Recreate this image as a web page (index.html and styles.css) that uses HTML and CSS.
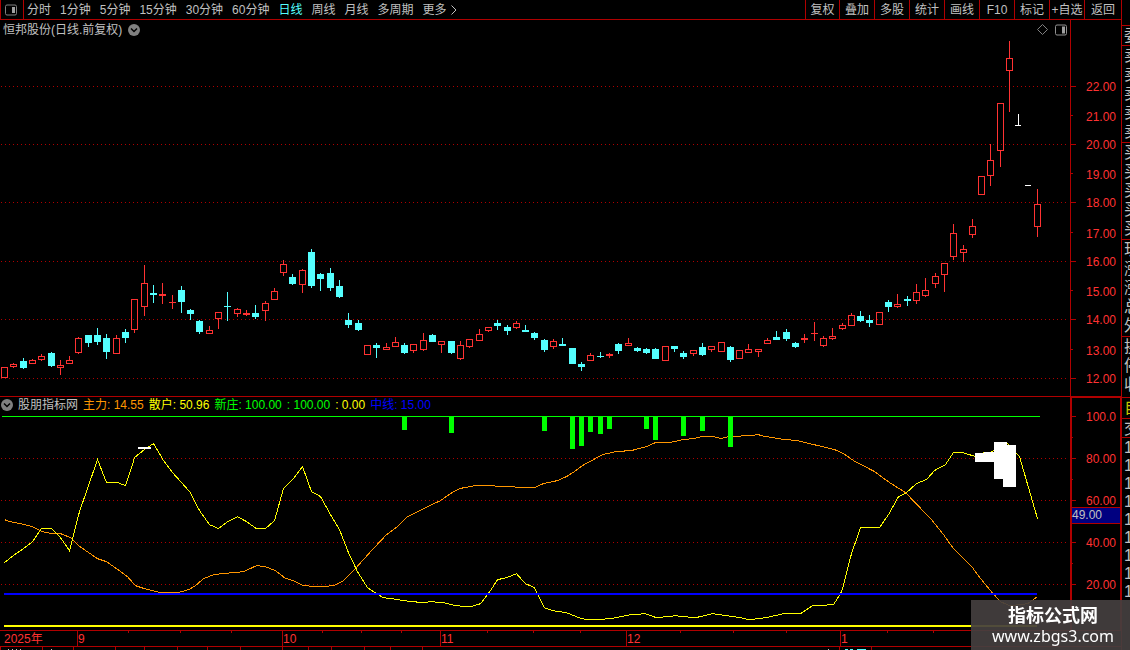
FILE: index.html
```html
<!DOCTYPE html>
<html lang="zh-CN">
<head>
    <meta charset="UTF-8">
    <meta name="viewport" content="width=device-width, initial-scale=1.0">
    <title>恒邦股份 日线</title>
    <link rel="stylesheet" href="styles.css">
</head>
<body>

    <div class="terminal">
        <main class="main">
            <nav class="toolbar">
                <button class="layout-btn" aria-label="布局">
                    <svg width="12" height="12" viewBox="0 0 12 12"><rect x="0.5" y="1" width="11" height="10" rx="1.5" fill="none" stroke="#808080"/><rect x="7" y="3" width="3" height="6" fill="#a0a0a0"/></svg>
                </button>
                <div class="periods">
                    <button>分时</button>
                    <button>1分钟</button>
                    <button>5分钟</button>
                    <button>15分钟</button>
                    <button>30分钟</button>
                    <button>60分钟</button>
                    <button class="active">日线</button>
                    <button>周线</button>
                    <button>月线</button>
                    <button>多周期</button>
                    <button class="more">更多<svg width="6" height="10" viewBox="0 0 6 10"><path d="M0.5 0.5L5 5L0.5 9.5" fill="none" stroke="#c0c0c0"/></svg></button>
                </div>
                <div class="tools">
                    <button>复权</button>
                    <button>叠加</button>
                    <button>多股</button>
                    <button>统计</button>
                    <button>画线</button>
                    <button>F10</button>
                    <button>标记</button>
                    <button>+自选</button>
                    <button>返回</button>
                </div>
            </nav>

            <section class="panel price-panel">
                <div class="plot-area">
                    <header class="panel-head title-head">
                        <span>恒邦股份(日线.前复权)</span>
                        <svg width="12" height="12" viewBox="0 0 12 12"><circle cx="6" cy="6" r="6" fill="#808080"/><path d="M3 4.5L6 7.5L9 4.5" fill="none" stroke="#000" stroke-width="1.5"/></svg>
                        <div class="head-icons">
                            <svg width="11" height="11" viewBox="0 0 11 11"><path d="M5.5 0.5L10.5 5.5L5.5 10.5L0.5 5.5Z" fill="none" stroke="#808080"/></svg>
                            <svg width="12" height="12" viewBox="0 0 12 12"><rect x="0.5" y="1" width="11" height="10" rx="1.5" fill="none" stroke="#909090"/><rect x="7" y="2.5" width="3" height="7" fill="#a0a0a0"/></svg>
                        </div>
                    </header>
                    <svg class="plot" id="pricePlot"></svg>
                </div>
                <svg class="axis" id="priceAxis"></svg>
            </section>

            <section class="panel ind-panel">
                <div class="plot-area">
                    <header class="panel-head legend">
                        <svg width="12" height="12" viewBox="0 0 12 12"><circle cx="6" cy="6" r="6" fill="#808080"/><path d="M3 4.5L6 7.5L9 4.5" fill="none" stroke="#000" stroke-width="1.5"/></svg>
                        <span>股朋指标网</span>
                        <span class="orange">主力: 14.55</span>
                        <span class="yellow">散户: 50.96</span>
                        <span class="green">新庄: 100.00</span>
                        <span class="green">: 100.00</span>
                        <span class="yellow">: 0.00</span>
                        <span class="blue">中线: 15.00</span>
                    </header>
                    <svg class="plot" id="indPlot"></svg>
                </div>
                <svg class="axis ind-axis" id="indAxis"></svg>
            </section>

            <svg class="time-axis" id="timeAxis"></svg>
        </main>

        <aside class="quote">
            <div class="quote-top"></div>
            <div class="quote-group head"><span>委</span></div>
            <div class="quote-group five"><span>卖</span><span>卖</span><span>卖</span><span>卖</span><span>卖</span></div>
            <div class="quote-group five"><span>买</span><span>买</span><span>买</span><span>买</span><span>买</span></div>
            <div class="quote-group five"><span>现</span><span>涨</span><span>涨</span><span>总</span><span>外</span></div>
            <div class="quote-group three"><span>换</span><span>停</span><span>收</span></div>
            <div class="quote-group tab"><span>自</span></div>
            <div class="quote-group deal"><span>交</span></div>
            <div class="quote-group ticks"><span>1</span><span>1</span><span>1</span><span>1</span><span>1</span><span>1</span><span>1</span><span>1</span><span>1</span></div>
        </aside>
    </div>

    <div class="site-mark">
        <strong>指标公式网</strong>
        <span>www.zbgs3.com</span>
    </div>

    <script>
        const RED = '#ff3232';
        const CYAN = '#54ffff';
        const LINE = '#b00000';
        const NS = 'http://www.w3.org/2000/svg';

        // colour, high, low, body top, body bottom
        const candles = [
            ['r',367,378,367,378],['r',363,368,364,367],['c',358,369,361,368],['r',359,364,360,364],
            ['r',354,361,356,360],['c',352,367,353,366],['r',360,375,365,368],['r',356,364,360,364],
            ['r',337,354,338,353],['c',335,347,335,343],['c',328,345,335,342],['c',334,359,338,352],
            ['r',335,354,338,354],['c',329,343,332,338],['r',299,333,299,330],['r',265,316,283,307],
            ['c',285,303,293,295],['r',283,304,294,296],['r',295,309,302,303],['c',286,313,290,302],
            ['c',309,320,310,314],['c',320,334,321,332],['r',326,334,330,334],['r',312,329,312,319],
            ['c',292,321,306,307],['r',308,317,309,314],['r',310,316,313,315],['c',305,319,313,317],
            ['r',301,321,303,311],['r',288,300,291,300],['r',260,276,264,273],['c',274,285,277,284],
            ['r',269,293,270,285],['c',249,288,252,286],['c',273,291,274,279],['c',268,291,273,288],
            ['c',280,298,286,297],['c',313,328,320,325],['c',320,331,323,330],['r',345,355,345,355],
            ['c',343,358,345,348],['r',343,350,347,350],['r',337,347,342,347],['c',343,354,345,353],
            ['r',344,353,344,351],['r',333,351,340,350],['c',334,342,335,342],['r',341,353,341,345],
            ['c',341,354,341,353],['r',341,360,345,359],['r',339,348,339,347],['r',329,341,334,341],
            ['r',327,332,327,331],['c',320,330,323,326],['c',325,335,327,331],['r',321,329,323,328],
            ['c',325,332,330,332],['c',332,340,333,338],['c',339,352,340,350],['r',339,349,341,347],
            ['c',338,346,344,346],['c',348,364,348,364],['c',362,371,364,367],['r',353,361,355,361],
            ['c',352,358,356,357],['r',353,358,354,356],['c',343,354,344,351],['r',338,346,343,346],
            ['c',347,352,348,351],['c',348,354,349,353],['c',348,359,349,359],['r',346,361,346,361],
            ['c',346,352,346,349],['c',351,359,353,357],['r',350,356,350,354],['c',343,356,347,355],
            ['r',346,352,346,350],['r',342,352,342,352],['c',346,362,347,360],['r',350,359,350,359],
            ['r',344,353,349,353],['r',349,357,349,352],['r',338,344,340,344],['c',331,340,337,340],
            ['c',329,341,332,339],['c',342,348,343,347],['r',334,343,338,340],['r',322,341,333,334],
            ['r',336,347,338,346],['r',328,340,336,339],['r',323,330,325,329],['r',313,326,315,326],
            ['c',311,322,316,321],['c',315,327,320,323],['r',312,325,312,325],['c',300,312,302,307],
            ['r',294,308,304,307],['c',296,306,299,301],['r',284,304,292,301],['r',278,297,290,296],
            ['r',273,288,276,284],['r',263,292,263,275],['r',224,260,233,257],['r',245,262,249,253],
            ['r',219,238,226,235],['r',176,195,176,195],['r',144,186,160,176],['r',103,167,103,151],
            ['r',41,112,58,71],['w',114,126,125,126],['w',185,186,185,186],['r',189,237,204,227]
        ];

        const mainForce = [[4,519],[9,521],[20,523],[32,526],[42,531],[52,533],[60,533],[70,537],[78,545],[97,558],[106,561],[119,570],[127,576],[135,585],[144,588],[152,590],[160,592],[177,592],[188,589],[195,585],[203,578],[213,574],[222,573],[243,571],[256,565],[265,566],[275,570],[284,577],[295,581],[303,585],[320,586],[333,585],[343,580],[353,570],[362,560],[371,550],[386,534],[397,526],[407,516],[423,508],[440,500],[450,493],[459,488],[475,485],[490,485],[500,486],[534,487],[543,483],[557,480],[566,476],[574,471],[582,465],[593,459],[602,454],[616,451],[631,450],[646,446],[655,442],[669,442],[683,439],[694,438],[701,436],[713,436],[720,438],[729,436],[752,435],[757,434],[765,436],[784,439],[797,440],[813,444],[834,449],[843,453],[853,460],[874,471],[889,482],[905,492],[931,519],[943,534],[953,548],[962,557],[972,567],[981,579],[990,590],[1000,601],[1009,605],[1027,603],[1037,596]];

        const retail = [[4,562],[14,554],[23,548],[32,541],[41,528],[51,528],[60,537],[69,550],[79,511],[88,485],[97,459],[106,482],[117,482],[125,485],[132,464],[134,457],[144,449],[153,443],[163,460],[172,472],[190,492],[199,510],[209,524],[218,528],[227,521],[237,516],[246,521],[256,528],[265,528],[274,520],[283,488],[293,478],[302,466],[311,491],[320,496],[330,514],[339,529],[348,552],[357,571],[367,587],[376,593],[383,597],[392,598],[403,600],[423,602],[430,601],[443,602],[455,605],[470,606],[480,603],[490,590],[497,579],[506,577],[516,573],[525,583],[534,587],[544,607],[553,610],[566,612],[581,618],[590,619],[610,618],[630,614],[645,613],[656,617],[675,615],[695,617],[712,613],[720,614],[740,617],[748,619],[765,617],[783,613],[800,613],[812,605],[833,604],[840,593],[842,588],[851,553],[860,527],[879,527],[888,514],[898,496],[906,492],[916,483],[926,479],[934,470],[945,464],[953,452],[962,452],[975,456],[984,452],[990,452],[995,449],[1007,443],[1019,456],[1037,518]];

        // candle index, bar bottom
        const bankerBars = [[43,430],[48,433],[58,431],[61,449],[62,446],[63,432],[64,434],[65,429],[69,429],[70,440],[73,436],[75,431],[78,447]];

        const candleX = i => Math.floor(4.5 + i * 9.306);

        // Each board maps design units (x0, y0, w, h) to the size of its svg
        function board(id, x0, y0, w, h) {
            const svg = document.getElementById(id);
            const box = svg.getBoundingClientRect();
            const kx = box.width / w;
            const ky = box.height / h;
            svg.innerHTML = '';

            function add(tag, attrs) {
                const el = document.createElementNS(NS, tag);
                for (const key in attrs) el.setAttribute(key, attrs[key]);
                svg.appendChild(el);
                return el;
            }
            const X = x => (x - x0) * kx;
            const Y = y => (y - y0) * ky;
            return {
                rect: (x, y, rw, rh, fill) => add('rect', { x: X(x), y: Y(y), width: rw * kx, height: rh * ky, fill }),
                frame: (x, y, rw, rh, stroke) => add('rect', { x: X(x + 0.5), y: Y(y + 0.5), width: (rw - 1) * kx, height: (rh - 1) * ky, fill: 'none', stroke }),
                dots: y => add('line', { x1: X(1), x2: X(1068), y1: Y(y + 0.5), y2: Y(y + 0.5), stroke: LINE, 'stroke-dasharray': '1 3' }),
                curve: (pts, stroke) => add('polyline', { points: pts.map(p => X(p[0] + 0.5) + ',' + Y(p[1] + 0.5)).join(' '), fill: 'none', stroke }),
                text: (x, y, str, anchor, cls) => {
                    const t = add('text', { x: X(x), y: Y(y), 'text-anchor': anchor, class: cls });
                    t.textContent = str;
                }
            };
        }

        function drawPrice() {
            const b = board('pricePlot', 0, 39, 1070, 357);
            [86, 144, 202, 261, 319, 378].forEach(b.dots);
            candles.forEach(([kind, high, low, top, bottom], i) => {
                const x = candleX(i);
                if (kind === 'w') {
                    b.rect(x, high, 1, low - high, '#fff');
                    b.rect(x - 3, top, 6, 1, '#fff');
                    return;
                }
                const color = kind === 'r' ? RED : CYAN;
                if (kind === 'c' || bottom - top < 3) {
                    b.rect(x, high, 1, low - high, color);
                    b.rect(x - 3, top, 7, bottom - top, color);
                } else {
                    if (top > high) b.rect(x, high, 1, top - high, color);
                    if (low > bottom) b.rect(x, bottom, 1, low - bottom, color);
                    b.frame(x - 3, top, 7, bottom - top, color);
                }
            });

            const a = board('priceAxis', 1070, 20, 51, 376);
            a.rect(1070, 20, 1, 376, LINE);
            const rows = [86, 115, 144, 173, 202, 232, 261, 290, 319, 349, 378];
            rows.forEach((y, i) => {
                const minor = i % 2;
                a.rect(1071, y, minor ? 2 : 5, 1, LINE);
                a.text(1116, y + (minor ? 6 : 5), (22 - i).toFixed(2), 'end', 'axis-text');
            });
        }

        function drawIndicator() {
            const b = board('indPlot', 0, 415, 1070, 215);
            [458, 500, 542, 584].forEach(b.dots);
            b.curve(mainForce, '#ff9600');
            b.curve(retail, '#ffff00');
            b.rect(2, 416, 1038, 1, '#00ff00');
            bankerBars.forEach(([i, bottom]) => b.rect(candleX(i) - 2, 417, 5, bottom - 417, '#00ff00'));
            b.rect(4, 593, 1033, 2, '#0000ff');
            b.rect(4, 625, 1033, 2, '#ffff00');
            // overbought marks
            b.rect(138, 447, 13, 2, '#fff');
            b.rect(975, 453, 19, 9, '#fff');
            b.rect(984, 452, 10, 10, '#fff');
            b.rect(994, 442, 13, 37, '#fff');
            b.rect(1003, 445, 13, 42, '#fff');

            const a = board('indAxis', 1070, 397, 51, 233);
            a.rect(1070, 397, 2, 233, LINE);
            a.rect(1070, 397, 51, 1, LINE);
            a.rect(1120, 397, 1, 233, LINE);
            ['100.0', '80.00', '60.00', '40.00', '20.00'].forEach((label, i) => {
                const y = 416 + i * 42;
                a.rect(1072, y, 4, 1, LINE);
                a.rect(1072, y + 21, 1, 1, LINE);
                a.text(1116, y + 5, label, 'end', 'axis-text');
            });
            a.rect(1072, 507, 48, 17, LINE);
            a.rect(1072, 508, 48, 15, '#000080');
            a.text(1072, 519, '49.00', 'start', 'axis-now');
        }

        function drawTime() {
            const b = board('timeAxis', 0, 631, 1121, 19);
            const months = [[77, '9'], [282, '10'], [440, '11'], [626, '12'], [840, '1']];
            b.text(4, 643, '2025年', 'start', 'axis-text');
            months.forEach(([x, label]) => {
                b.rect(x, 631, 1, 15, LINE);
                b.text(x + 1, 643, label, 'start', 'axis-text');
            });
            [128, 180, 231, 322, 361, 401, 487, 533, 580, 680, 733, 786, 887, 933].forEach(x => b.rect(x, 631, 1, 2, LINE));
            b.rect(0, 646, 1121, 1, LINE);
            [0, 42, 73, 115, 144, 177, 207, 240, 282, 308, 331, 364, 390, 422, 839, 871].forEach(x => b.rect(x, 647, 1, 3, LINE));
            [8, 12, 16, 20, 51, 828].forEach(x => b.rect(x, 649, 1, 1, '#c0c0c0'));
            [845, 850].forEach(x => b.rect(x, 649, 3, 1, CYAN));
            b.rect(857, 649, 9, 1, CYAN);
        }

        function drawAll() {
            drawPrice();
            drawIndicator();
            drawTime();
        }

        window.addEventListener('resize', drawAll);
        drawAll();
    </script>

</body>
</html>
```

FILE: styles.css
```css
* {
    box-sizing: border-box;
}
body {
    margin: 0;
    background-color: #000;
    color: #c0c0c0;
    font-family: "Liberation Sans", "Noto Sans CJK SC", sans-serif;
    font-size: 12px;
    line-height: 18px;
}
button {
    padding: 0;
    border: 0;
    background: none;
    color: inherit;
    font: inherit;
    white-space: nowrap;
    cursor: pointer;
}
svg {
    display: block;
    flex: none;
}
.terminal {
    display: flex;
    height: 100vh;
    overflow: hidden;
}
.main {
    flex: 1;
    min-width: 0;
    display: flex;
    flex-direction: column;
}

/* toolbar */
.toolbar {
    display: flex;
    height: 20px;
    border-bottom: 1px solid #b00000;
    border-left: 1px solid #b00000;
}
.layout-btn {
    width: 23px;
    border-right: 1px solid #b00000;
    display: flex;
    align-items: center;
    padding-left: 4px;
}
.periods {
    flex: 1;
    display: flex;
    gap: 9px;
    padding-left: 3px;
}
.periods .active {
    color: #54ffff;
}
.more {
    display: flex;
    align-items: center;
    gap: 4px;
}
.tools {
    display: flex;
}
.tools button {
    width: 35px;
    border-left: 1px solid #b00000;
}
.tools button:first-child {
    width: 34px;
}
.tools button:last-child {
    width: 37px;
}

/* chart panels */
.panel {
    display: flex;
    min-height: 0;
    border-bottom: 1px solid #b00000;
}
.price-panel {
    flex: 377 1 0;
}
.ind-panel {
    flex: 234 1 0;
}
.plot-area {
    flex: 1;
    min-width: 0;
    display: flex;
    flex-direction: column;
}
.panel-head {
    display: flex;
    align-items: center;
    height: 18px;
}
.title-head {
    height: 19px;
    gap: 6px;
    padding: 0 3px;
}
.head-icons {
    display: flex;
    align-items: center;
    gap: 7px;
    margin-left: auto;
}
.legend {
    gap: 5px;
    padding-left: 1px;
    padding-bottom: 2px;
    white-space: nowrap;
}
.orange {
    color: #ff9600;
}
.yellow {
    color: #ffff00;
}
.green {
    color: #00ff00;
}
.blue {
    color: #0000ff;
}
.plot {
    flex: 1;
    width: 100%;
    min-height: 0;
    shape-rendering: crispEdges;
}
.axis {
    width: 51px;
    height: 100%;
    shape-rendering: crispEdges;
}
.time-axis {
    width: 100%;
    height: 19px;
    shape-rendering: crispEdges;
}
.axis-text {
    fill: #ff3232;
}
.axis-now {
    fill: #c0c0c0;
}

/* quote column, only its left edge is on screen */
.quote {
    width: 9px;
    overflow: hidden;
    border-left: 1px solid #b00000;
    font-size: 16px;
}
.quote-top {
    height: 25px;
}
.quote-group {
    display: flex;
    flex-direction: column;
    border-top: 1px solid #b00000;
    padding-left: 2px;
    line-height: 19px;
}
.head {
    height: 20px;
}
.five {
    height: 97px;
}
.three {
    height: 61px;
}
.tab {
    height: 21px;
    color: #c8c800;
}
.deal {
    height: 19px;
}
.ticks {
    line-height: 18px;
    padding-top: 1px;
}

/* site mark */
.site-mark {
    position: fixed;
    right: 0;
    bottom: 0;
    width: 159px;
    height: 50px;
    padding-top: 3px;
    padding-left: 5px;
    background-color: rgba(68, 62, 62, 0.93);
    color: #fff;
    display: flex;
    flex-direction: column;
    align-items: center;
    font-family: "Noto Sans", "Noto Sans CJK SC", sans-serif;
    font-size: 16px;
    line-height: 22px;
}
.site-mark strong {
    font-family: "Noto Sans CJK SC", sans-serif;
    font-size: 18px;
}
```
